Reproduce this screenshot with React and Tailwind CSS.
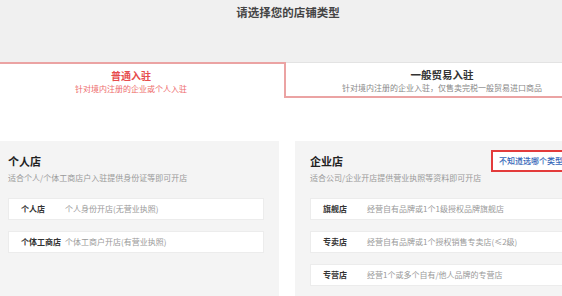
import React from 'react';

const FONT = { fontFamily: '"Noto Sans CJK SC", "Noto Sans", sans-serif' };

const personal = [
  { name: '个人店', desc: '个人身份开店(无营业执照)' },
  { name: '个体工商店', desc: '个体工商户开店(有营业执照)' }
];

const company = [
  { name: '旗舰店', desc: '经营自有品牌或1个1级授权品牌旗舰店' },
  { name: '专卖店', desc: '经营自有品牌或1个授权销售专卖店(≤2级)' },
  { name: '专营店', desc: '经营1个或多个自有/他人品牌的专营店' }
];

const ShopRow = ({ name, desc }) => (
  <div className="h-[22px] flex items-center pl-[12px] bg-white border border-[#ececec]">
    <span className="w-[44px] flex-none text-[8px] font-bold text-[#333]">{name}</span>
    <span className="text-[8px] text-[#999] whitespace-nowrap">{desc}</span>
  </div>
);

const Panel = ({ title, sub, rows, help }) => (
  <div className="w-[286px] flex-none bg-[#f4f4f4] px-[15px] pt-[9px] h-[160px]">
    <div className="h-[22px] flex items-center">
      <h3 className="flex-none whitespace-nowrap text-[11px] font-bold text-[#222] leading-[14px]">{title}</h3>
      {help && (
        <button className="flex-none ml-[148px] h-[22px] pl-[6px] pr-[8px] border-2 border-[#e33b3b] bg-white text-[8px] font-medium text-[#3466b8] whitespace-nowrap">
          不知道选哪个类型?
        </button>
      )}
    </div>
    <p className="text-[8px] leading-[12px] text-[#999] whitespace-nowrap">{sub}</p>
    <div className="mt-[14px] flex flex-col gap-[11px]">
      {rows.map((r) => (
        <ShopRow key={r.name} {...r} />
      ))}
    </div>
  </div>
);

export default function App() {
  return (
    <div className="w-[562px] h-[296px] overflow-hidden bg-white" style={FONT}>
      <div className="w-[620px] ml-[-22px]">
        {/* 顶部标题 */}
        <div className="h-[62px] bg-[#f0f0f0] pt-[4px] text-center">
          <h2 className="text-[11.5px] leading-[16px] font-bold text-[#444]">请选择您的店铺类型</h2>
        </div>

        {/* 入驻类型 tabs */}
        <div className="flex h-[36px]">
          <div className="w-[308px] border-t-2 border-r-2 border-[#eba3a3] bg-white text-center pt-[5px]">
            <div className="text-[10px] leading-[14px] font-bold text-[#e64c4c]">普通入驻</div>
            <div className="text-[8px] leading-[12px] text-[#ee6b6b]">针对境内注册的企业或个人入驻</div>
          </div>
          <div className="flex-1 border-t border-t-[#e3e3e3] border-b-2 border-b-[#eba3a3] bg-white text-center pt-[5px]">
            <div className="text-[10.5px] leading-[14px] font-bold text-[#333]">一般贸易入驻</div>
            <div className="text-[8px] leading-[12px] text-[#888]">针对境内注册的企业入驻，仅售卖完税一般贸易进口商品</div>
          </div>
        </div>

        {/* 店铺类型 */}
        <div className="flex gap-[16px] px-[15px] mt-[43px]">
          <Panel title="个人店" sub="适合个人/个体工商店户入驻提供身份证等即可开店" rows={personal} />
          <Panel title="企业店" sub="适合公司/企业开店提供营业执照等资料即可开店" rows={company} help />
        </div>
      </div>
    </div>
  );
}
